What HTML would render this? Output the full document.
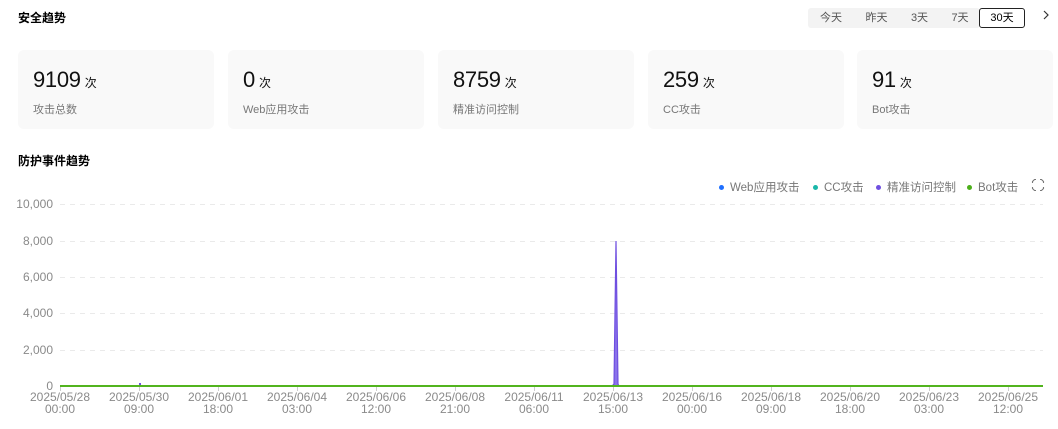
<!DOCTYPE html>
<html><head><meta charset="utf-8"><style>
*{margin:0;padding:0;box-sizing:border-box}
body{width:1058px;height:429px;background:#fff;position:relative;overflow:hidden;font-family:"Liberation Sans","Noto Sans CJK SC",sans-serif;color:#191919}
.a{position:absolute}
.t{font-size:12px;font-weight:bold;color:#000}
.card{position:absolute;top:50px;width:196px;height:79px;background:#f9f9f9;border-radius:6px}
.num{position:absolute;left:15px;top:17px;font-size:22px;color:#111;white-space:nowrap;letter-spacing:-0.3px}
.num span{font-size:12px;margin-left:4px;letter-spacing:0}
.lab{position:absolute;left:15px;top:51px;font-size:11px;color:#777}
.seg{position:absolute;top:8px;left:808px;height:20px;width:172px;background:#f3f3f3;border-radius:3px}
.seg div{position:absolute;top:0;height:20px;line-height:20px;font-size:11px;color:#555;text-align:center}
.yl{position:absolute;left:0;width:53px;text-align:right;font-size:12px;color:#8a8a8a}
.xl{position:absolute;top:391px;width:80px;margin-left:-40px;text-align:center;font-size:12px;line-height:12px;color:#8a8a8a}
.leg{position:absolute;top:179px;font-size:11.5px;color:#777;white-space:nowrap}
.leg i{display:inline-block;width:5px;height:5px;border-radius:50%;margin-right:6px;vertical-align:1px}
</style></head><body>
<div class="a t" style="left:18px;top:9px">安全趋势</div>
<div class="seg">
<div style="left:0;width:46px">今天</div>
<div style="left:46px;width:45px">昨天</div>
<div style="left:91px;width:41px">3天</div>
<div style="left:132px;width:40px">7天</div>
</div>
<div class="a" style="left:979px;top:8px;width:46px;height:20px;border:1px solid #222;border-radius:3px;background:#fff;font-size:11px;line-height:18px;text-align:center;color:#000">30天</div>
<svg class="a" style="left:1042px;top:10px" width="8" height="10" viewBox="0 0 8 10" fill="none" stroke="#333" stroke-width="1.2"><path d="M2 1l4 4-4 4"/></svg>

<div class="card" style="left:18px"><div class="num">9109<span>次</span></div><div class="lab">攻击总数</div></div>
<div class="card" style="left:228px"><div class="num">0<span>次</span></div><div class="lab">Web应用攻击</div></div>
<div class="card" style="left:438px"><div class="num">8759<span>次</span></div><div class="lab">精准访问控制</div></div>
<div class="card" style="left:648px"><div class="num">259<span>次</span></div><div class="lab">CC攻击</div></div>
<div class="card" style="left:857px"><div class="num">91<span>次</span></div><div class="lab">Bot攻击</div></div>

<div class="a t" style="left:18px;top:152px">防护事件趋势</div>

<div class="leg" style="left:719px"><i style="background:#1f6fff"></i>Web应用攻击</div>
<div class="leg" style="left:813px"><i style="background:#19b7a9"></i>CC攻击</div>
<div class="leg" style="left:876px"><i style="background:#6f4fe0"></i>精准访问控制</div>
<div class="leg" style="left:967px"><i style="background:#4caf1a"></i>Bot攻击</div>
<svg class="a" style="left:1031px;top:178px" width="14" height="14" viewBox="0 0 14 14" fill="none" stroke="#777" stroke-width="1.1"><path d="M5 1.5H3.5L1.5 3.5V5M9 1.5h1.5l2 2V5M1.5 9v1.5l2 2H5M12.5 9v1.5l-2 2H9"/></svg>

<div class="yl" style="top:197px">10,000</div>
<div class="yl" style="top:234px">8,000</div>
<div class="yl" style="top:270px">6,000</div>
<div class="yl" style="top:306px">4,000</div>
<div class="yl" style="top:343px">2,000</div>
<div class="yl" style="top:379px">0</div>

<svg class="a" style="left:0;top:0" width="1058" height="429">
<g stroke="#eaeaea" stroke-dasharray="5,5">
<line x1="60" y1="204.5" x2="1043" y2="204.5"/><line x1="60" y1="241.5" x2="1043" y2="241.5"/><line x1="60" y1="277.5" x2="1043" y2="277.5"/><line x1="60" y1="313.5" x2="1043" y2="313.5"/><line x1="60" y1="350.5" x2="1043" y2="350.5"/>
</g>
<g stroke="#ccc"><line x1="60.5" y1="386" x2="60.5" y2="391"/><line x1="139.5" y1="386" x2="139.5" y2="391"/><line x1="218.5" y1="386" x2="218.5" y2="391"/><line x1="297.5" y1="386" x2="297.5" y2="391"/><line x1="376.5" y1="386" x2="376.5" y2="391"/><line x1="455.5" y1="386" x2="455.5" y2="391"/><line x1="534.5" y1="386" x2="534.5" y2="391"/><line x1="613.5" y1="386" x2="613.5" y2="391"/><line x1="692.5" y1="386" x2="692.5" y2="391"/><line x1="771.5" y1="386" x2="771.5" y2="391"/><line x1="850.5" y1="386" x2="850.5" y2="391"/><line x1="929.5" y1="386" x2="929.5" y2="391"/><line x1="1008.5" y1="386" x2="1008.5" y2="391"/></g>
<path d="M612 386 L614 384 L616 241 L618 384 L619 386 Z" fill="#8a72ea" stroke="#6f4fe0" stroke-width="1.2"/>
<line x1="140" y1="386" x2="140" y2="383" stroke="#6f4fe0" stroke-width="2"/>
<line x1="60" y1="386" x2="1043" y2="386" stroke="#52b41e" stroke-width="2"/>
</svg>

<div class="xl" style="left:60px">2025/05/28<br>00:00</div>
<div class="xl" style="left:139px">2025/05/30<br>09:00</div>
<div class="xl" style="left:218px">2025/06/01<br>18:00</div>
<div class="xl" style="left:297px">2025/06/04<br>03:00</div>
<div class="xl" style="left:376px">2025/06/06<br>12:00</div>
<div class="xl" style="left:455px">2025/06/08<br>21:00</div>
<div class="xl" style="left:534px">2025/06/11<br>06:00</div>
<div class="xl" style="left:613px">2025/06/13<br>15:00</div>
<div class="xl" style="left:692px">2025/06/16<br>00:00</div>
<div class="xl" style="left:771px">2025/06/18<br>09:00</div>
<div class="xl" style="left:850px">2025/06/20<br>18:00</div>
<div class="xl" style="left:929px">2025/06/23<br>03:00</div>
<div class="xl" style="left:1008px">2025/06/25<br>12:00</div>
</body></html>
